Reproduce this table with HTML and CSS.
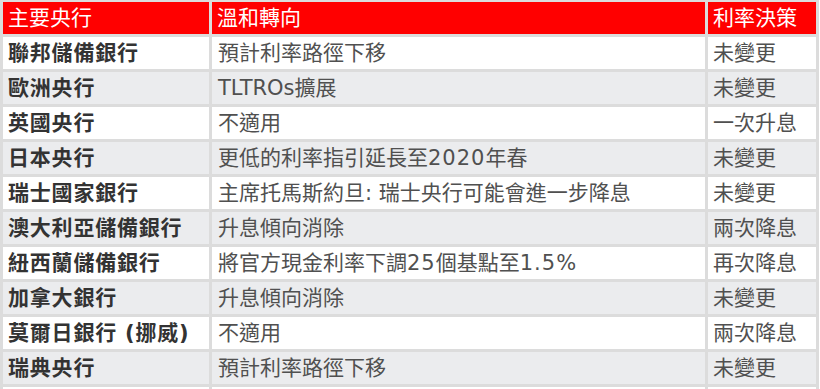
FILE: index.html
```html
<!DOCTYPE html>
<html lang="zh-Hant">
<head>
<meta charset="utf-8">
<title>主要央行</title>
<link rel="stylesheet" href="styles.css">
</head>
<body>
<table class="rates">
  <colgroup>
    <col class="c-bank">
    <col class="c-shift">
    <col class="c-decision">
  </colgroup>
  <thead>
    <tr class="head">
      <th>主要央行</th>
      <th>溫和轉向</th>
      <th>利率決策</th>
    </tr>
  </thead>
  <tbody>
    <tr><td class="bank">聯邦儲備銀行</td><td>預計利率路徑下移</td><td>未變更</td></tr>
    <tr><td class="bank">歐洲央行</td><td>TLTROs擴展</td><td>未變更</td></tr>
    <tr><td class="bank">英國央行</td><td>不適用</td><td>一次升息</td></tr>
    <tr><td class="bank">日本央行</td><td>更低的利率指引延長至<span class="num">2020</span>年春</td><td>未變更</td></tr>
    <tr><td class="bank">瑞士國家銀行</td><td>主席托馬斯約旦: 瑞士央行可能會進一步降息</td><td>未變更</td></tr>
    <tr><td class="bank">澳大利亞儲備銀行</td><td>升息傾向消除</td><td>兩次降息</td></tr>
    <tr><td class="bank">紐西蘭儲備銀行</td><td>將官方現金利率下調<span class="num">25</span>個基點至<span class="num">1.5%</span></td><td>再次降息</td></tr>
    <tr><td class="bank">加拿大銀行</td><td>升息傾向消除</td><td>未變更</td></tr>
    <tr><td class="bank">莫爾日銀行 (挪威)</td><td>不適用</td><td>兩次降息</td></tr>
    <tr><td class="bank">瑞典央行</td><td>預計利率路徑下移</td><td>未變更</td></tr>
    <tr><td class="bank">&nbsp;</td><td>&nbsp;</td><td>&nbsp;</td></tr>
  </tbody>
</table>
</body>
</html>
```

FILE: styles.css
```css
html, body {
  margin: 0;
  padding: 0;
  background: #ffffff;
}

body {
  font-family: "DejaVu Sans", "Noto Sans CJK TC", sans-serif;
  font-size: 21px;
  color: #505050;
  overflow: hidden;
}

.rates {
  table-layout: fixed;
  width: 819px;
  border-collapse: separate;
  border-spacing: 3px;
  background: #dcdcdc;
  margin-top: -1px;
}

.c-bank { width: 206px; }
.c-shift { width: 493px; }
.c-decision { width: 108px; }

.rates th,
.rates td {
  height: 32px;
  padding: 0 5px;
  box-sizing: border-box;
  text-align: left;
  vertical-align: middle;
  white-space: nowrap;
  overflow: hidden;
  line-height: 32px;
}

.rates th {
  background: #ff0000;
  color: #ffffff;
  font-weight: normal;
}

.rates td {
  background: #ffffff;
}

.rates tbody tr:nth-child(even) td {
  background: #ebecee;
}

.rates td.bank {
  font-weight: bold;
  color: #333333;
  letter-spacing: 0.8px;
}

.rates td + td {
  padding-left: 6px;
}

.rates td + td + td {
  padding-left: 5px;
}

.num {
  letter-spacing: 1px;
}
```
